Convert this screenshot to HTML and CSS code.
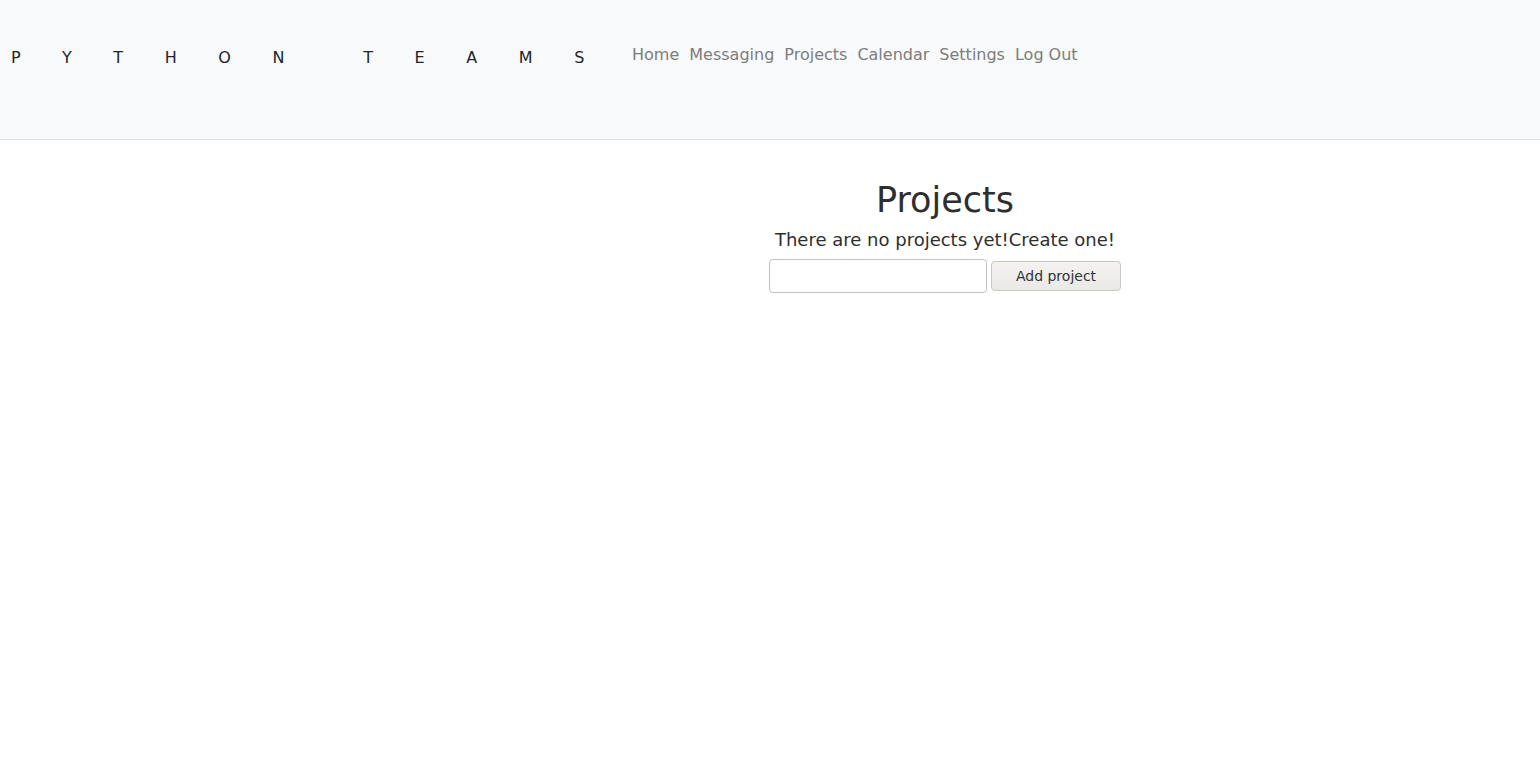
FILE: index.html
```html
<!DOCTYPE html>
<html lang="en">
<head>
<meta charset="utf-8">
<title>Projects</title>
<link rel="stylesheet" href="styles.css">
</head>
<body>
<header class="navbar">
  <a class="brand" href="#">PYTHON TEAMS</a>
  <nav class="nav">
    <a class="nav-link" href="#">Home</a>
    <a class="nav-link" href="#">Messaging</a>
    <a class="nav-link" href="#">Projects</a>
    <a class="nav-link" href="#">Calendar</a>
    <a class="nav-link" href="#">Settings</a>
    <a class="nav-link" href="#">Log Out</a>
  </nav>
</header>
<div class="layout">
  <aside class="sidebar"></aside>
  <main class="content">
    <h1 class="title">Projects</h1>
    <p class="empty">There are no projects yet!Create one!</p>
    <form class="add-form">
      <input class="field" type="text">
      <button class="btn" type="button">Add project</button>
    </form>
  </main>
</div>
</body>
</html>
```
FILE: styles.css
```css
html, body {
  margin: 0;
  padding: 0;
  background: #ffffff;
  font-family: "DejaVu Sans", sans-serif;
  color: #333333;
}

.navbar {
  height: 139px;
  background: #f8f9fa;
  border-bottom: 1px solid #dee2e6;
  display: flex;
  align-items: flex-start;
  padding-left: 11px;
}

.brand {
  font-size: 16px;
  letter-spacing: 41.6px;
  word-spacing: -9.5px;
  color: #212529;
  text-decoration: none;
  margin-top: 47px;
  line-height: 22px;
}

.nav {
  display: flex;
  margin-top: 44px;
  margin-left: 1px;
}

.nav-link {
  font-size: 16px;
  line-height: 22px;
  color: #7d7d7d;
  text-decoration: none;
  padding: 0 5px;
}

.layout {
  display: flex;
}

.sidebar {
  width: 350px;
  flex: none;
}

.content {
  flex: 1;
  display: flex;
  flex-direction: column;
  align-items: center;
}

.title {
  font-size: 35px;
  font-weight: 400;
  line-height: 42px;
  margin: 39px 0 0;
  color: #2e2e2e;
}

.empty {
  font-size: 18px;
  line-height: 22px;
  margin: 8px 0 0;
  color: #2e2e2e;
}

.add-form {
  display: flex;
  align-items: center;
  gap: 4px;
  margin-top: 8px;
}

.field {
  width: 218px;
  height: 34px;
  box-sizing: border-box;
  border: 1px solid #c6c3bf;
  border-radius: 4px;
  background: #ffffff;
  padding: 0 6px;
  font-family: "DejaVu Sans", sans-serif;
  font-size: 14px;
}

.btn {
  width: 130px;
  height: 30px;
  box-sizing: border-box;
  border: 1px solid #c9c6c2;
  border-radius: 4px;
  background: linear-gradient(#f4f3f2, #ebe9e7);
  font-family: "DejaVu Sans", sans-serif;
  font-size: 14px;
  color: #2e3436;
  padding: 0;
}
```
